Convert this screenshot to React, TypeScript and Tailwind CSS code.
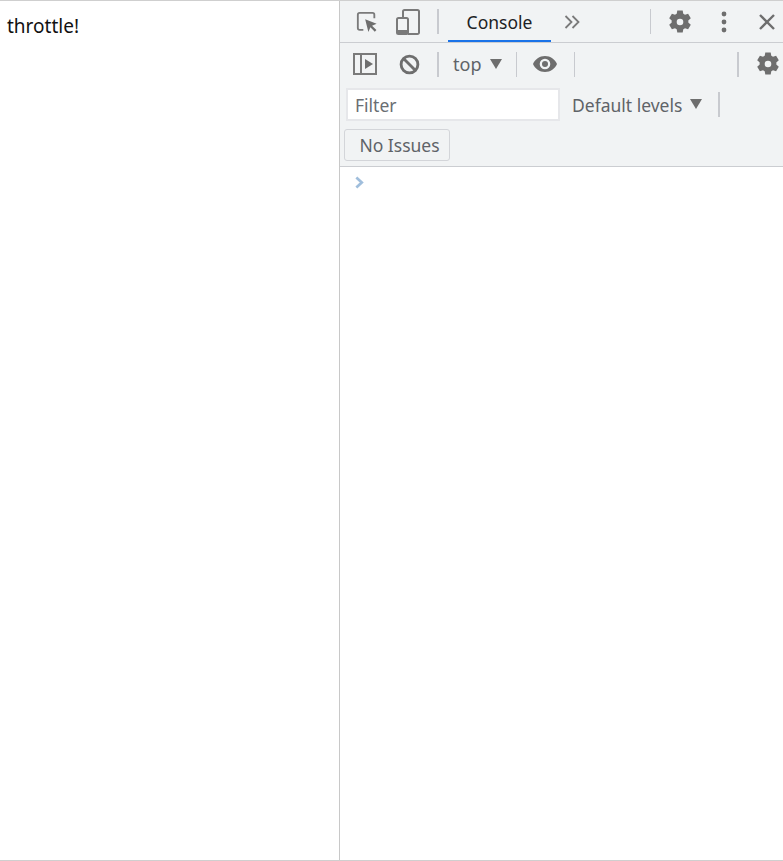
const Sep = ({ className = "" }: { className?: string }) => (
    <div className={`bg-[#c8cacf] ${className}`} />
);

const Gear = ({ className = "" }: { className?: string }) => (
    <svg viewBox="0 0 24 24" className={className} fill="#6e6e6e">
        <path
            fillRule="evenodd"
            d="M9.300 0.500h5.400l0.600 3.200c0.600 0.300 1.200 0.600 1.700 1l3.100-1 2.700 4.600-2.500 2.200c0.100 0.700 0.100 1.300 0 2l2.500 2.200-2.700 4.600-3.100-1c-0.500 0.400-1.100 0.700-1.700 1l-0.600 3.200H9.300l-0.600-3.200c-0.600-0.300-1.200-0.600-1.700-1l-3.100 1-2.700-4.600 2.500-2.200c-0.100-0.700-0.100-1.300 0-2L1.200 8.300l2.700-4.600 3.100 1c0.500-0.400 1.100-0.700 1.700-1zM12 8.700a3.300 3.300 0 1 0 0 6.600 3.300 3.300 0 0 0 0-6.600z"
        />
    </svg>
);

const Caret = ({ className = "" }: { className?: string }) => (
    <svg viewBox="0 0 12 10" className={className} fill="#6e6e6e">
        <path d="M0 0h12L6 10z" />
    </svg>
);

const TopBar = () => (
    <div className="flex h-[42px] items-center border-b border-[#cbcdd1] pl-[15px]">
        <svg viewBox="0 0 24 24" className="ml-px h-[22px] w-[22px]" fill="none">
            <path
                d="M8 20.500H4a2 2 0 0 1-2-2V4a2 2 0 0 1 2-2h14a2 2 0 0 1 2 2v4"
                stroke="#7a7a7a"
                strokeWidth="2"
            />
            <path d="M10 9l12.500 4.800-5 2.200 4.800 4.800-1.800 1.800-4.800-4.800-2.200 5z" fill="#6e6e6e" />
        </svg>
        <svg viewBox="0 0 24 26" className="ml-[18px] h-[26px] w-[24px]" fill="none" stroke="#7a7a7a" strokeWidth="2">
            <path d="M7 9V2.500a1.500 1.500 0 0 1 1.500-1.500h13a1.500 1.500 0 0 1 1.500 1.500v21a1.500 1.500 0 0 1-1.500 1.500H12" />
            <rect x="1" y="9" width="11" height="16" rx="1.500" />
            <path d="M1 22.500h11" strokeWidth="3" />
        </svg>
        <Sep className="ml-[17px] h-[25px] w-[2px]" />
        <div className="ml-[9px] flex h-[41px] w-[103px] items-center justify-center border-b-2 border-[#1a73e8] pt-[4px] text-[17.5px] text-[#202124]">
            Console
        </div>
        <svg viewBox="0 0 16 14" className="ml-[13px] h-[14px] w-[16px]" fill="none" stroke="#7a7a7a" strokeWidth="1.800">
            <path d="M1.500 1l6 6-6 6M8.500 1l6 6-6 6" />
        </svg>
        <Sep className="ml-[70px] h-[25px] w-px" />
        <Gear className="ml-[17px] h-[24px] w-[24px]" />
        <svg viewBox="0 0 6 22" className="ml-[29px] h-[22px] w-[6px]" fill="#6e6e6e">
            <circle cx="3" cy="3" r="2.400" />
            <circle cx="3" cy="11" r="2.400" />
            <circle cx="3" cy="19" r="2.400" />
        </svg>
        <svg viewBox="0 0 16 16" className="ml-[32px] h-[16px] w-[16px]" fill="none" stroke="#6e6e6e" strokeWidth="2.400">
            <path d="M1 1l14 14M15 1L1 15" />
        </svg>
    </div>
);

const ConsoleBar = () => (
    <div className="flex h-[42px] items-center pl-[13px]">
        <svg viewBox="0 0 24 22" className="h-[22px] w-[24px]" fill="none" stroke="#7a7a7a" strokeWidth="2">
            <rect x="1" y="1" width="22" height="20" />
            <path d="M8 1v20" />
            <path d="M12 6l8 5-8 5z" fill="#6e6e6e" stroke="none" />
        </svg>
        <svg viewBox="0 0 22 22" className="ml-[22px] h-[21px] w-[21px]" fill="none" stroke="#6e6e6e" strokeWidth="3">
            <circle cx="11" cy="11" r="8.800" />
            <path d="M5 5l12 12" />
        </svg>
        <Sep className="ml-[17px] h-[25px] w-[2px]" />
        <span className="ml-[14px] text-[#5f6368]">top</span>
        <Caret className="ml-[9px] h-[10px] w-[12px]" />
        <Sep className="ml-[14px] h-[25px] w-px" />
        <svg viewBox="0 0 24 16" className="ml-[16px] h-[16px] w-[24px]" fill="#6e6e6e">
            <path
                fillRule="evenodd"
                d="M12 0C6.500 0 2 3.300 0 8c2 4.700 6.500 8 12 8s10-3.300 12-8c-2-4.700-6.500-8-12-8zm0 13.300a5.300 5.300 0 1 1 0-10.600 5.300 5.300 0 0 1 0 10.600zM12 5a3 3 0 1 0 0 6 3 3 0 0 0 0-6z"
            />
        </svg>
        <Sep className="ml-[17px] h-[25px] w-px" />
        <Sep className="ml-[162px] h-[25px] w-[2px]" />
        <Gear className="ml-[17px] h-[24px] w-[24px]" />
    </div>
);

const FilterBar = () => (
    <div className="flex h-[40px] items-start pl-[6px] pt-[3px]">
        <div className="flex h-[33px] w-[214px] items-center border-2 border-[#e6e7ea] bg-white pl-[7px] pt-[1px] text-[17.5px] text-[#6a6e73]">
            Filter
        </div>
        <span className="ml-[12px] mt-[4px] text-[17.5px] text-[#5f6368]">Default levels</span>
        <Caret className="ml-[8px] mt-[11px] h-[10px] w-[12px]" />
        <Sep className="ml-[16px] mt-[4px] h-[25px] w-[2px]" />
    </div>
);

const IssuesBar = () => (
    <div className="flex h-[42px] items-start border-b border-[#cbcdd1] pl-[4px] pt-[4px]">
        <div className="flex h-[32px] w-[106px] items-center justify-center rounded-[3px] border border-[#d3d5d9] pl-[5px] pt-[1px] text-[17.5px] text-[#5f6368]">
            No Issues
        </div>
    </div>
);

export default function App() {
    return (
        <div className="flex h-[861px] w-[783px] flex-col overflow-hidden bg-white font-['Noto_Sans',sans-serif] text-[18px]">
            <div className="flex flex-1 border-y border-[#cfcfcf]">
                <div className="w-[340px] border-r border-[#c8c8c8] pl-[7px] pt-[11px] text-[19px] leading-[28px] text-[#111]">
                    throttle!
                </div>
                <div className="flex flex-1 flex-col">
                    <div className="bg-[#f1f3f4]">
                        <TopBar />
                        <ConsoleBar />
                        <FilterBar />
                        <IssuesBar />
                    </div>
                    <div className="pl-[15px] pt-[9px]">
                        <svg viewBox="0 0 10 14" className="h-[13px] w-[9px]" fill="none" stroke="#a0bedc" strokeWidth="3">
                            <path d="M1.500 1.500L7.500 7l-6 5.500" />
                        </svg>
                    </div>
                </div>
            </div>
        </div>
    );
}
